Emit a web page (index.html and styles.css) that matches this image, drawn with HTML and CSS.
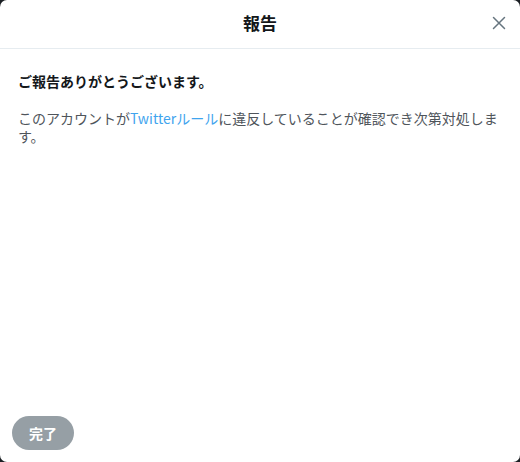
FILE: index.html
```html
<!DOCTYPE html>
<html lang="ja">
<head>
<meta charset="utf-8">
<link rel="stylesheet" href="styles.css">
</head>
<body>
<div class="modal">
  <header class="modal-header">
    <h1 class="modal-title">報告</h1>
    <button class="close-btn" aria-label="閉じる">
      <svg viewBox="0 0 14 14" width="14" height="14"><path d="M1.5 1.5 L12.5 12.5 M12.5 1.5 L1.5 12.5" stroke="#66757f" stroke-width="1.5" fill="none" stroke-linecap="round"/></svg>
    </button>
  </header>
  <main class="modal-body">
    <p class="thanks">ご報告ありがとうございます。</p>
    <p class="message">このアカウントが<a class="link" href="#">Twitterルール</a>に違反していることが確認でき次第対処します。</p>
  </main>
  <footer class="modal-footer">
    <button class="done-btn">完了</button>
  </footer>
</div>
</body>
</html>
```
FILE: styles.css
```css
html, body {
  margin: 0;
  padding: 0;
  height: 100%;
  background: #1b1f23;
}
body {
  font-family: "Noto Sans CJK JP", "Noto Sans", sans-serif;
}
.modal {
  box-sizing: border-box;
  width: 520px;
  height: 462px;
  background: #fff;
  border-radius: 7px;
  display: flex;
  flex-direction: column;
  overflow: hidden;
}
.modal-header {
  height: 48px;
  border-bottom: 1px solid #e6ecf0;
  display: flex;
  align-items: center;
  justify-content: center;
  position: relative;
  flex: none;
}
.modal-title {
  margin: 0;
  font-size: 17px;
  font-weight: 700;
  color: #14171a;
  line-height: 1;
  margin-top: -4px;
}
.close-btn {
  position: absolute;
  right: 13px;
  top: 13px;
  width: 16px;
  height: 20px;
  padding: 0;
  border: 0;
  background: none;
  display: flex;
  align-items: center;
  justify-content: center;
}
.modal-body {
  flex: 1;
  padding: 22px 18px 0 18px;
}
.thanks {
  margin: 0 0 18px;
  font-size: 14px;
  font-weight: 700;
  color: #14171a;
  line-height: 20px;
}
.message {
  margin: 0;
  font-size: 14px;
  color: #4f555b;
  line-height: 18px;
}
.link {
  color: #3fa4ee;
  text-decoration: none;
}
.modal-footer {
  flex: none;
  padding: 0 0 12px 12px;
}
.done-btn {
  width: 62px;
  height: 34px;
  border: 0;
  border-radius: 17px;
  background: #969fa5;
  color: #fff;
  font-family: "Noto Sans CJK JP", sans-serif;
  font-size: 14px;
  font-weight: 700;
  padding: 0;
}
```
